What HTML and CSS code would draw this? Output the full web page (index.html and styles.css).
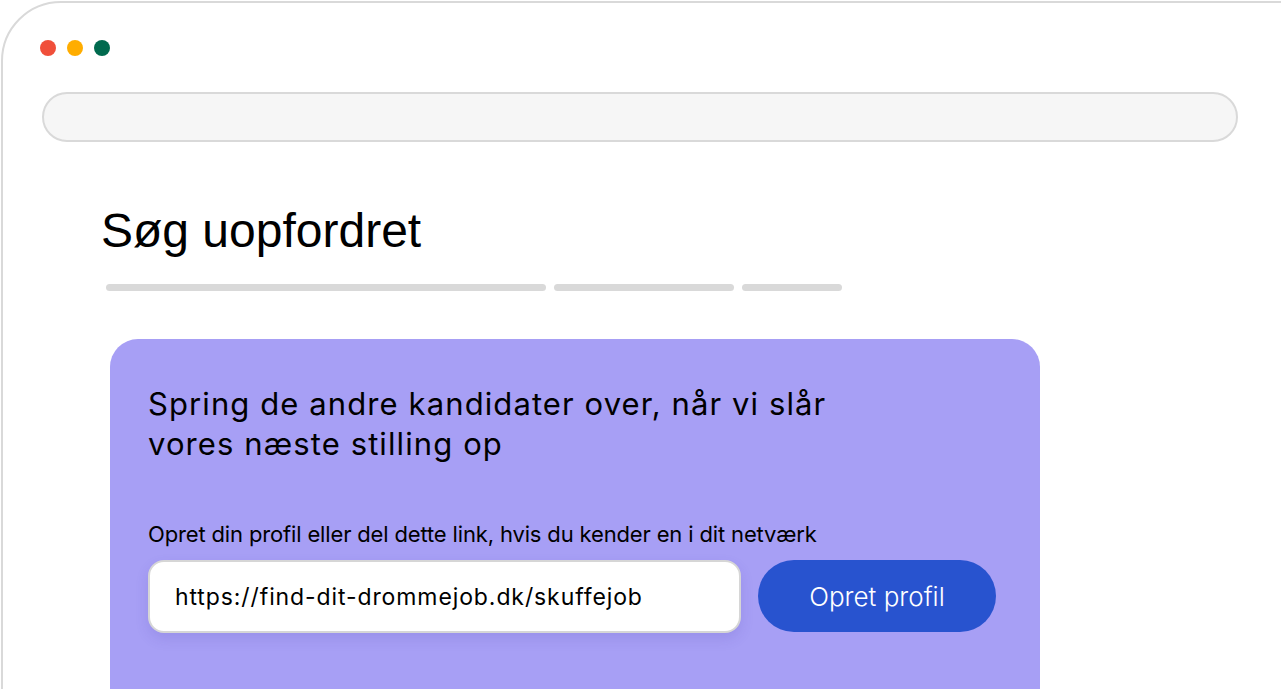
FILE: index.html
```html
<!DOCTYPE html>
<html>
<head>
    <meta charset="UTF-8">
    <meta name="viewport" content="width=device-width, initial-scale=1.0">
    <title>Søg uopfordret</title>
    <link rel="stylesheet" href="styles.css">
</head>
<body>
    <div class="window">
        <div class="dots">
            <span class="dot red"></span>
            <span class="dot yellow"></span>
            <span class="dot green"></span>
        </div>
        <div class="address"></div>

        <main class="content">
            <h1 class="title">Søg uopfordret</h1>
            <div class="skeleton">
                <span class="bar bar-lg"></span>
                <span class="bar bar-md"></span>
                <span class="bar bar-sm"></span>
            </div>

            <section class="card">
                <h2 class="card-title">Spring de andre kandidater over, når vi slår<br>vores næste stilling op</h2>
                <p class="card-text">Opret din profil eller del dette link, hvis du kender en i dit netværk</p>
                <div class="share">
                    <div class="link">https://find-dit-drommejob.dk/skuffejob</div>
                    <button class="btn" type="button">Opret profil</button>
                </div>
            </section>
        </main>
    </div>
</body>
</html>
```

FILE: styles.css
```css
html,
body {
    height: 100%;
    margin: 0;
    padding: 0;
}

body {
    overflow: hidden;
    background: #fff;
    font-family: Inter, "Noto Sans", sans-serif;
    color: #000;
}

.window {
    margin: 1px 0 0 1px;
    width: 1400px;
    height: 900px;
    box-sizing: border-box;
    border: 2px solid #d9d9d9;
    border-radius: 60px 0 0 0;
    padding: 37px 0 0 37px;
}

.dots {
    display: flex;
    gap: 11px;
    height: 16px;
}

.dot {
    width: 16px;
    height: 16px;
    border-radius: 50%;
}

.red { background: #f04f3a; }
.yellow { background: #ffad00; }
.green { background: #006a4e; }

.address {
    margin-top: 36px;
    margin-left: 2px;
    width: 1196px;
    height: 50px;
    box-sizing: border-box;
    border: 2px solid #d9d9d9;
    border-radius: 25px;
    background: #f6f6f6;
}

.content {
    padding-left: 61px;
}

.title {
    margin: 62px 0 0;
    font-family: "Liberation Sans", Arial, sans-serif;
    font-weight: 400;
    font-size: 48px;
    line-height: 54px;
}

.skeleton {
    display: flex;
    gap: 8px;
    margin: 26px 0 0 5px;
}

.bar {
    height: 7px;
    border-radius: 4px;
    background: #d9d9d9;
}

.bar-lg { width: 440px; }
.bar-md { width: 180px; }
.bar-sm { width: 100px; }

.card {
    margin: 48px 0 0 9px;
    width: 930px;
    height: 400px;
    box-sizing: border-box;
    padding: 45px 38px 0;
    border-radius: 28px;
    background: #a79ff5;
}

.card-title {
    margin: 0;
    font-weight: 400;
    font-size: 31px;
    line-height: 40px;
    letter-spacing: 1.1px;
}

.card-text {
    margin: 57px 0 0;
    font-size: 22px;
    line-height: 26px;
    letter-spacing: -0.15px;
}

.share {
    display: flex;
    gap: 17px;
    margin-top: 13px;
}

.link {
    width: 593px;
    height: 73px;
    box-sizing: border-box;
    display: flex;
    align-items: center;
    padding-left: 25px;
    border: 2px solid #d6d6d6;
    border-radius: 16px;
    background: #fff;
    box-shadow: 0 6px 14px rgba(60, 40, 160, .12);
    font-size: 23px;
    letter-spacing: 0.9px;
}

.btn {
    width: 238px;
    height: 72px;
    border: 0;
    border-radius: 36px;
    background: #2853cf;
    color: #fff;
    font-family: Inter, "Noto Sans", sans-serif;
    font-size: 26px;
    font-weight: 300;
    cursor: pointer;
}
```
